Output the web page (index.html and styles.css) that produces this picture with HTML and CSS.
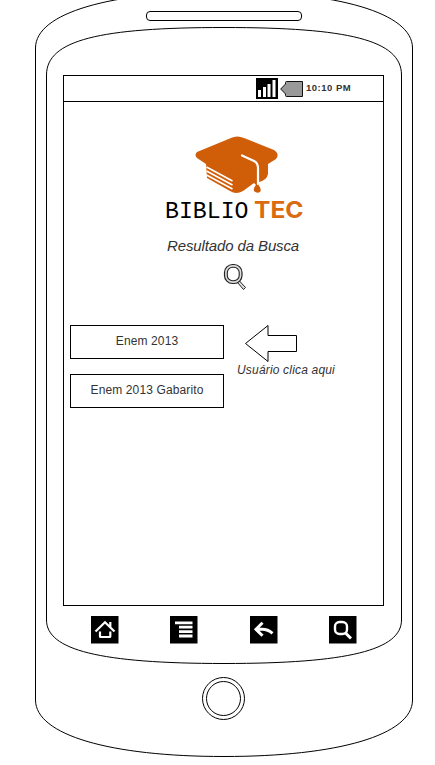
FILE: index.html
```html
<!DOCTYPE html>
<html lang="pt-BR">
<head>
<meta charset="utf-8">
<title>Biblio Tec</title>
<link rel="stylesheet" href="styles.css">
</head>
<body>
<div class="phone">
  <svg class="phone-outline" width="435" height="765" viewBox="0 0 435 765" aria-hidden="true">
    <path d="M35.5 48V700C35.5 735 110 756.500 224 756.500S412.500 735 412.500 700V48C412.500 13 338 -8.500 224 -8.500S35.500 13 35.500 48Z"/>
    <path d="M46.500 75V620C46.500 650 100 663.500 224 663.500S401.500 650 401.500 620V75C401.500 40 348 27.500 224 27.500S46.500 40 46.500 75Z"/>
  </svg>
  <div class="speaker"></div>
  <main class="screen">
    <header class="status">
      <svg class="signal" width="22" height="21" viewBox="0 0 22 21">
        <path fill="#000" d="M0 0H22V21H0Z"/>
        <path fill="#fff" d="M2 12h3v7H2ZM7 9h3v10H7ZM11.500 6h3v13h-3ZM16.500 2h3v17h-3Z"/>
      </svg>
      <svg class="battery" width="23" height="16" viewBox="0 0 23 16">
        <path d="M.7 8 5.500 3V1.500Q5.500 .5 6.500 .5H22.500V15.500H6.500Q5.500 15.500 5.500 14.500V13Z" fill="#999" stroke="#111"/>
      </svg>
      <span class="clock">10:10 PM</span>
    </header>
    <svg class="logo" width="150" height="100" viewBox="0 0 150 100">
      <path fill="#d05d08" d="M37 22 71 8Q77 5 84 8L114 20Q120 24 116 29L108 34V44Q107 50 99 52L98.500 55Q102 59 100 62Q97 64 94 61Q93 58 96 55L94 53 83 61Q76 65 70 61L47 48 46 34 37 28Q34 25 37 22Z"/>
      <path class="tassel" d="M82 25.500 94 31Q98 33 98 38V54"/>
      <path class="pages" d="M46.500 37 72.500 51M46.500 41 72.500 55M46.500 45 72.500 59"/>
      <text class="biblio" x="5" y="88" textLength="83.500" lengthAdjust="spacingAndGlyphs">BIBLIO</text>
      <text class="tec" x="94" y="88" textLength="49.500" lengthAdjust="spacingAndGlyphs">TEC</text>
    </svg>
    <h1 class="title">Resultado da Busca</h1>
    <svg class="search" width="24" height="28" viewBox="0 0 24 28">
      <path d="M14.500 19.500 20.500 26.500 22.500 24.500 16.500 18" fill="#ddd" stroke="#222"/>
      <rect x="1.500" y="1.500" width="17.500" height="19" rx="8" fill="#ddd" stroke="#222" stroke-width="1.200"/>
      <rect x="4.300" y="4.300" width="11.900" height="13.400" rx="5.300" fill="#fff" stroke="#222" stroke-width="1.100"/>
    </svg>
    <section class="results">
      <div class="list">
        <div class="result">Enem 2013</div>
        <div class="result">Enem 2013 Gabarito</div>
      </div>
      <div class="hint">
        <svg width="52" height="38" viewBox="0 0 52 38"><path d="M.5 18.500 23 .5V10.500H51.500V26.500H23V36.500Z" fill="#fff" stroke="#000"/></svg>
        <span>Usuário clica aqui</span>
      </div>
    </section>
  </main>
  <nav class="keys">
    <svg viewBox="0 0 28 28"><path class="tile" d="M0 0h27.500v27.500H0Z"/><path class="house" d="M4.500 15.500 14 6.300 23.500 15.500M19.300 6v6M9 15.500V20.500Q9 21 9.500 21H18.800Q19.300 21 19.300 20.500V15.500"/></svg>
    <svg viewBox="0 0 28 28"><path class="tile" d="M0 0h27.500v27.500H0Z"/><path class="lines" d="M5 6.800H22.500M9 11.200H22.500M9 15.600H22.500M9 20H22.500"/></svg>
    <svg viewBox="0 0 28 28"><path class="tile" d="M0 0h27.500v27.500H0Z"/><path class="thick" d="M12.500 6.800 6 13.300 12.500 19.800M7 13.300H12Q18 13.300 22.500 17.300"/></svg>
    <svg viewBox="0 0 28 28"><path class="tile" d="M0 0h27.500v27.500H0Z"/><rect x="6" y="6" width="12" height="12" rx="4.500"/><path class="thick" d="M16 16.500 22 22.500"/></svg>
  </nav>
  <div class="home-button"></div>
</div>
</body>
</html>
```
FILE: styles.css
```css
* { box-sizing: border-box; }
body { margin: 0; background: #fff; font-family: "Liberation Sans", Arial, sans-serif; color: #333; }
svg { display: block; }
.phone { position: relative; width: 435px; height: 765px; overflow: hidden; padding: 11px 51px 0 63px; }
.phone-outline { position: absolute; left: 0; top: 0; fill: none; stroke: #000; }
.speaker { position: relative; width: 156px; height: 10px; margin-left: 83px; border: 1px solid #000; border-radius: 4px; }
.screen { position: relative; width: 321px; height: 531px; margin-top: 54px; border: 1px solid #000; }
.status { display: flex; align-items: center; height: 26px; padding-left: 192px; border-bottom: 1px solid #000; }
.battery { margin-left: 2px; }
.clock { margin: -2px 0 0 3px; font-size: 9.500px; font-weight: bold; letter-spacing: .5px; white-space: nowrap; }
.logo { margin: 28px 0 0 96px; }
.tassel { fill: none; stroke: #fff; stroke-width: 2.200; stroke-linecap: round; }
.pages { fill: none; stroke: #fff; stroke-width: 1.700; }
.biblio { font: 24px "Liberation Mono", monospace; fill: #000; }
.tec { font: 700 23px Inter, sans-serif; fill: #da6b10; }
.title { margin: 6px 0 0 103px; font-size: 15px; line-height: 20px; letter-spacing: -.12px; font-weight: normal; font-style: italic; white-space: nowrap; }
.search { margin: 7px 0 0 159px; }
.results { display: flex; margin: 34px 0 0 6px; }
.list { display: grid; gap: 15px; width: 154px; }
.result { height: 34px; border: 1px solid #000; font-size: 12px; line-height: 31px; letter-spacing: .12px; text-align: center; }
.hint { margin-left: 13px; font-size: 12px; line-height: 14px; letter-spacing: .18px; font-style: italic; white-space: nowrap; }
.hint svg { margin-left: 8px; }
.keys { position: relative; display: flex; justify-content: space-between; width: 266px; margin: 10px 0 0 28px; }
.keys svg { width: 28px; height: 28px; fill: none; stroke: #fff; stroke-width: 2.400; }
.keys .tile { fill: #000; stroke: none; }
.keys .house { stroke-width: 2.200; }
.keys .lines { stroke-width: 2.800; }
.keys .thick { stroke-width: 3; }
.home-button { position: relative; width: 43px; height: 43px; margin: 33px 0 0 139px; border: 1px solid #000; border-radius: 50%; }
.home-button::after { content: ""; position: absolute; inset: 3px; border: 1px solid #000; border-radius: 50%; }
```
